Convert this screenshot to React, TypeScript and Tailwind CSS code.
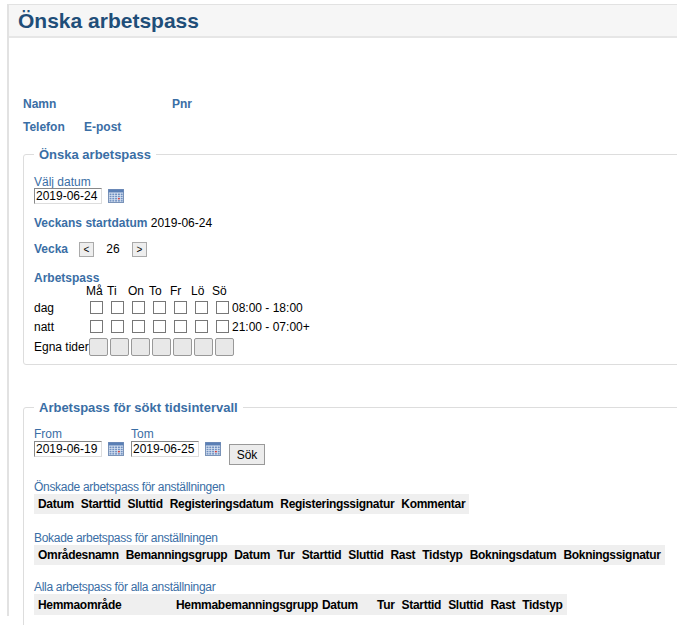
import React from "react";

const Cal = () => (
  <svg width="16" height="14" viewBox="0 0 16 14" className="ml-[6px]">
    <rect x="0.5" y="0.5" width="15" height="13" fill="#dfe8f5" stroke="#7a93b8" />
    <rect x="0.5" y="0.5" width="15" height="3" fill="#5a7fb5" />
    {[0, 1, 2, 3].map((r) =>
      [0, 1, 2, 3, 4].map((c) => (
        <rect key={r + "-" + c} x={1.5 + c * 2.8} y={4.5 + r * 2.2} width="2" height="1.5" fill={r === 2 && c === 3 ? "#d04040" : "#6f8fc0"} />
      ))
    )}
  </svg>
);

const Input = ({ v }: { v: string }) => (
  <div className="w-[68px] h-[16px] border border-[#888] border-r-[#ddd] border-b-[#ddd] bg-white text-[12px] font-normal leading-[14px] px-[1px] text-black">{v}</div>
);

const days = ["Må", "Ti", "On", "To", "Fr", "Lö", "Sö"];

const Legend = ({ t }: { t: string }) => (
  <div className="absolute -top-[10px] left-[10px] bg-white px-[5px] text-[13px] font-bold text-[#3a6ea5]">{t}</div>
);

export default function App() {
  const blue = "text-[#3a6ea5]";
  return (
    <div className="w-[677px] h-[625px] bg-white overflow-hidden relative" style={{ fontFamily: '"Liberation Sans", Arial, sans-serif' }}>
      <div className="absolute left-[7px] top-[4px] w-[2px] h-[612px] bg-[#e2e2e2]" />
      <div className="ml-[9px] mt-[4px] h-[34px] bg-[#f6f6f6] border-t border-[#e2e2e2] border-b-2 border-b-[#e6e6e6] flex items-center px-[9px]">
        <h1 className="text-[21px] font-bold text-[#1f4e79]">Önska arbetspass</h1>
      </div>
      <div className="pl-[23px] pt-[57px] text-[12px] font-bold">
        <div className={`flex ${blue}`}><span className="w-[149px]">Namn</span><span>Pnr</span></div>
        <div className={`flex mt-[5px] ${blue}`}><span className="w-[61px]">Telefon</span><span>E-post</span></div>

        <div className="relative mt-[18px] w-[700px] h-[211px] border border-[#ddd] rounded-[3px] pl-[10px] pt-[21px]">
          <Legend t="Önska arbetspass" />
          <div className={`${blue} font-normal leading-[12px] text-[12px]`}>Välj datum</div>
          <div className="flex items-center"><Input v="2019-06-24" /><Cal /></div>
          <div className="mt-[10px] font-normal"><span className={`${blue} font-bold`}>Veckans startdatum</span> <span className="font-normal">2019-06-24</span></div>
          <div className="flex items-center mt-[8px] font-normal">
            <span className={`${blue} font-bold w-[45px]`}>Vecka</span>
            <div className="w-[15px] h-[15px] border border-[#aaa] bg-[#eee] text-[10px] leading-[13px] text-center">&lt;</div>
            <span className="w-[38px] text-center">26</span>
            <div className="w-[15px] h-[15px] border border-[#aaa] bg-[#eee] text-[10px] leading-[13px] text-center">&gt;</div>
          </div>
          <div className={`${blue} mt-[14px] leading-[12px]`}>Arbetspass</div>
          <div className="font-normal text-[12px]">
            <div className="flex pl-[52px] leading-[13px] mt-[1px]">
              {days.map((d) => <span key={d} className="w-[21px]">{d}</span>)}
            </div>
            {[["dag", "08:00 - 18:00"], ["natt", "21:00 - 07:00+"]].map(([l, t]) => (
              <div key={l} className="flex items-center h-[19px]">
                <span className="w-[56px]">{l}</span>
                {days.map((d) => <div key={d} className="w-[13px] h-[13px] border border-[#777] bg-white mr-[8px]" />)}
                <span className="-ml-[5px]">{t}</span>
              </div>
            ))}
            <div className="flex items-center mt-[2px]">
              <span className="w-[55px]">Egna tider</span>
              {days.map((d) => <div key={d} className="w-[19px] h-[18px] border border-[#999] rounded-[2px] bg-[#e8e8e8] mr-[2px]" />)}
            </div>
          </div>
        </div>

        <div className="relative mt-[42px] w-[700px] h-[240px] border border-[#ddd] rounded-[3px] pl-[10px] pt-[20px]">
          <Legend t="Arbetspass för sökt tidsintervall" />
          <div className="flex items-end font-normal">
            <div>
              <div className={`${blue} leading-[13px] text-[12px]`}>From</div>
              <div className="flex items-center"><Input v="2019-06-19" /><Cal /></div>
            </div>
            <div className="ml-[7px]">
              <div className={`${blue} leading-[13px] text-[12px]`}>Tom</div>
              <div className="flex items-center"><Input v="2019-06-25" /><Cal /></div>
            </div>
            <div className="ml-[8px] -mb-[8px] w-[36px] h-[21px] border border-[#999] bg-[#ececec] text-[12px] flex items-center justify-center">Sök</div>
          </div>
          {[
            ["Önskade arbetspass för anställningen", ["Datum", "Starttid", "Sluttid", "Registeringsdatum", "Registeringssignatur", "Kommentar"], "mt-[24px]"],
            ["Bokade arbetspass för anställningen", ["Områdesnamn", "Bemanningsgrupp", "Datum", "Tur", "Starttid", "Sluttid", "Rast", "Tidstyp", "Bokningsdatum", "Bokningssignatur"], "mt-[18px]"],
          ].map(([t, cols, m]) => (
            <div key={t as string} className={m as string}>
              <div className={`${blue} font-normal text-[12px] leading-[13px] tracking-[-0.3px]`}>{t as string}</div>
              <div className="inline-flex bg-[#efefef] h-[20px] items-center px-[4px] gap-[7px] tracking-[-0.3px] whitespace-nowrap">
                {(cols as string[]).map((c) => <span key={c}>{c}</span>)}
              </div>
            </div>
          ))}
          <div className="mt-[16px]">
            <div className={`${blue} font-normal text-[12px] leading-[13px] tracking-[-0.3px]`}>Alla arbetspass för alla anställningar</div>
            <div className="inline-flex bg-[#efefef] h-[21px] items-center px-[4px] tracking-[-0.3px] whitespace-nowrap">
              <span className="w-[138px]">Hemmaområde</span>
              <span className="w-[146px]">Hemmabemanningsgrupp</span>
              <span className="w-[55px]">Datum</span>
              <span className="flex gap-[7px]"><span>Tur</span><span>Starttid</span><span>Sluttid</span><span>Rast</span><span>Tidstyp</span></span>
            </div>
          </div>
        </div>
      </div>
    </div>
  );
}
